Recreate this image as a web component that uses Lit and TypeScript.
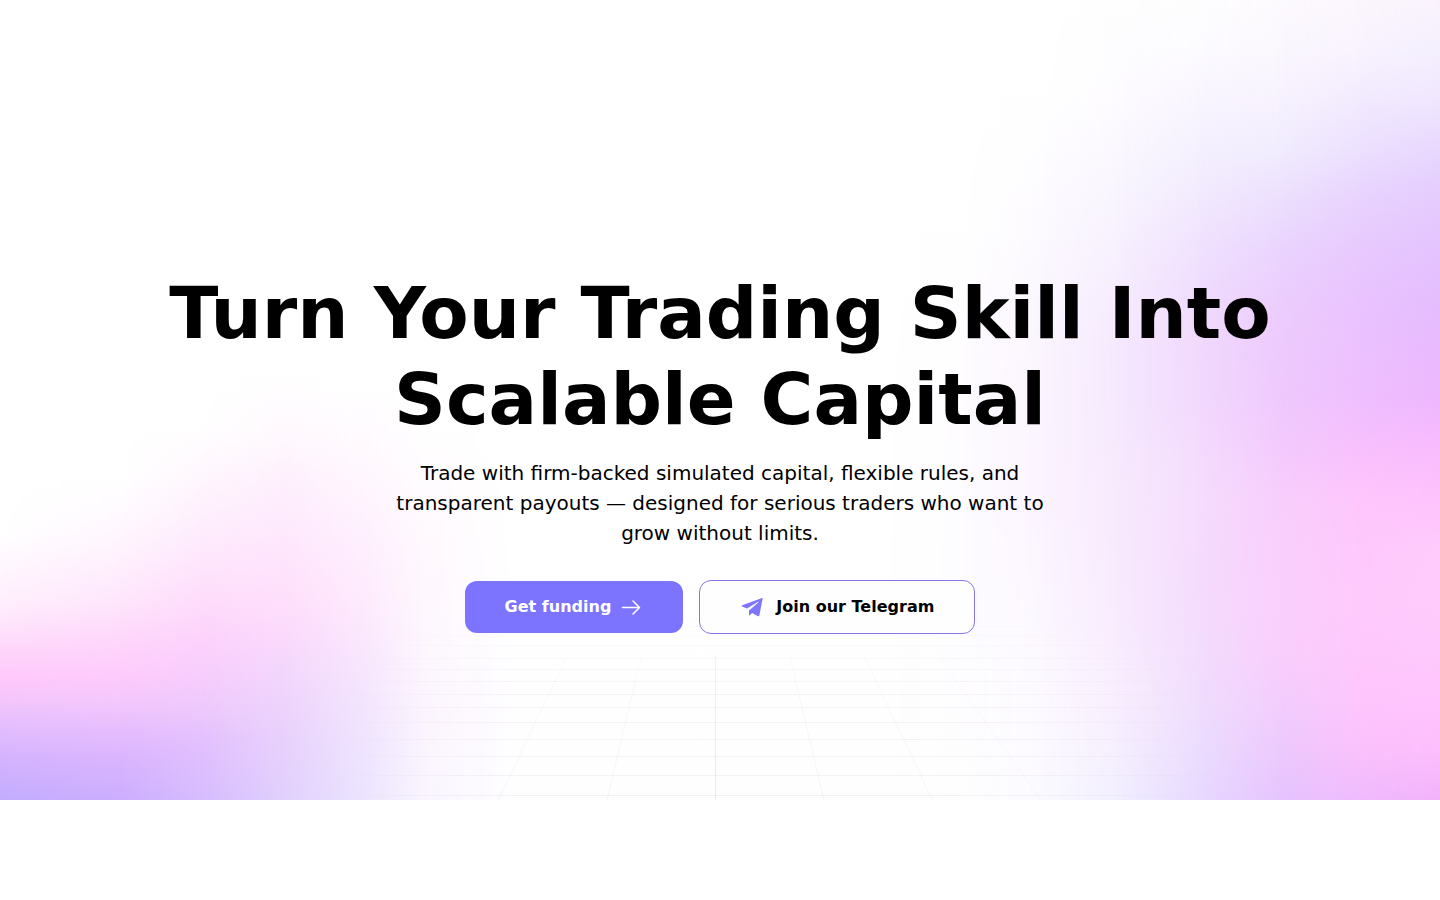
import { LitElement, html, svg, css } from "lit";
import { customElement } from "lit/decorators.js";

type Stop = [number, string];

// Vertical colour ramps of the backdrop, one per x position; neighbours are cross-faded.
const RAMPS: { x: number; stops: Stop[] }[] = [
  { x: 0, stops: [[535, "#ffffff"], [575, "#fff5fe"], [600, "#ffeffd"], [625, "#fee4fc"], [650, "#fed6fb"], [680, "#ffc8fc"], [700, "#f4c6fc"], [730, "#e2bdfe"], [760, "#d4b3fe"], [800, "#c3adfe"]] },
  { x: 120, stops: [[475, "#ffffff"], [510, "#fffbff"], [550, "#fff3fe"], [600, "#fee6fc"], [640, "#fed6fb"], [675, "#fecbfc"], [700, "#f4c7fc"], [730, "#e6bdfe"], [760, "#dab4fe"], [800, "#cbaefe"]] },
  { x: 200, stops: [[425, "#ffffff"], [470, "#fff8fe"], [520, "#feeffd"], [560, "#fee6fc"], [600, "#fedcfb"], [640, "#fdd2fc"], [680, "#f6ccfc"], [710, "#edc8fc"], [740, "#e3c0fe"], [800, "#d6bcfe"]] },
  { x: 280, stops: [[375, "#ffffff"], [440, "#fff8fe"], [480, "#fef0fd"], [520, "#feeafd"], [560, "#fee4fc"], [600, "#fedefb"], [640, "#fad8fc"], [670, "#f3d6fc"], [700, "#eed3fc"], [740, "#e8d0fc"], [800, "#e0cffd"]] },
  { x: 360, stops: [[385, "#ffffff"], [480, "#fff6fe"], [540, "#feeffe"], [600, "#feeafd"], [650, "#f9e6fd"], [700, "#f3e4fd"], [750, "#eee3fe"], [800, "#ebe3fe"]] },
  { x: 430, stops: [[420, "#ffffff"], [550, "#fff9fe"], [650, "#fdf7fe"], [720, "#fcf5fe"], [800, "#faf6ff"]] },
  { x: 520, stops: [[500, "#ffffff"], [800, "#fefeff"]] },
  { x: 880, stops: [[500, "#ffffff"], [800, "#fefefe"]] },
  { x: 960, stops: [[200, "#ffffff"], [400, "#fefcff"], [600, "#fdfcff"], [800, "#fefefe"]] },
  { x: 1040, stops: [[80, "#ffffff"], [200, "#fdfbff"], [300, "#fbf7fe"], [400, "#fbf4fe"], [500, "#fcf4ff"], [600, "#fcf7ff"], [700, "#fdfaff"], [800, "#fbfaff"]] },
  { x: 1120, stops: [[0, "#fefefe"], [100, "#fdfbff"], [200, "#f8f4fe"], [300, "#f6ebfe"], [350, "#f5e8fe"], [400, "#f5e8fe"], [500, "#f7e9fd"], [600, "#f8eafe"], [650, "#f8ecfe"], [700, "#f8edfe"], [750, "#f5eefe"], [800, "#f1eeff"]] },
  { x: 1200, stops: [[0, "#fefdfe"], [50, "#fcfbff"], [100, "#f9f5ff"], [150, "#f4f0fe"], [200, "#f2e9fe"], [250, "#f0e1fe"], [300, "#efdbfd"], [350, "#f1d8fd"], [400, "#f2d8fd"], [450, "#f4dbfd"], [500, "#f5dcfd"], [550, "#f5dbfd"], [650, "#f3dcfd"], [700, "#f0ddfd"], [750, "#ebdcfe"], [800, "#e7d9ff"]] },
  { x: 1280, stops: [[0, "#fdfafe"], [50, "#fbf7fe"], [100, "#f7f2fe"], [150, "#f1ecfe"], [200, "#ecdffd"], [250, "#ead4fe"], [300, "#eccdfd"], [350, "#edcafd"], [400, "#efc9fd"], [450, "#f3cafd"], [500, "#f8cefc"], [600, "#facffc"], [650, "#f9cefc"], [700, "#f3cdfd"], [750, "#ecc9fd"], [800, "#e6c4fe"]] },
  { x: 1360, stops: [[0, "#fbf6fd"], [50, "#f8f3fe"], [100, "#f2eafe"], [150, "#ece0fe"], [200, "#e8d2fe"], [250, "#e8c9fe"], [300, "#e9c3fe"], [350, "#ecc1fe"], [400, "#efbffe"], [450, "#f8c0fd"], [500, "#fec6fc"], [600, "#fecafc"], [650, "#fec8fc"], [700, "#fec5fc"], [750, "#fac1fc"], [800, "#efbbfd"]] },
  { x: 1440, stops: [[0, "#faf3fd"], [50, "#f4effe"], [100, "#f0e6fe"], [130, "#eaddfe"], [180, "#e5cffe"], [250, "#e4c3fe"], [300, "#e4bdfe"], [350, "#e8b9fe"], [400, "#eeb7fe"], [440, "#f7bafe"], [500, "#fec2fc"], [550, "#fecbfc"], [600, "#fecbfc"], [650, "#fec9fc"], [700, "#ffc4fd"], [750, "#fdbefd"], [800, "#f2b2fa"]] },
];

// Perspective floor: rows get further apart towards the viewer.
const ROWS = [617, 626, 635, 645, 658, 669, 681, 694, 707, 722, 739, 756, 775, 795];
const RAYS = [-3, -2, -1, 0, 1, 2, 3, 4];

@customElement("hero-backdrop")
export class HeroBackdrop extends LitElement {
  static styles = css`
    :host {
      display: block;
    }
    .art {
      display: block;
      width: 100%;
      height: 100%;
    }
    .crossfade {
      mask-type: alpha;
    }
  `;

  private ramp(i: number) {
    const { x, stops } = RAMPS[i];
    const from = i === 0 ? 0 : RAMPS[i - 1].x;
    const width = 1440 - from;
    return svg`
      <linearGradient id="ramp${i}" gradientUnits="userSpaceOnUse" x1="0" y1="0" x2="0" y2="800">
        ${stops.map(([y, color]) => svg`<stop offset=${y / 800} stop-color=${color}></stop>`)}
      </linearGradient>
      <linearGradient id="fade${i}" gradientUnits="userSpaceOnUse" x1=${from} y1="0" x2=${x} y2="0">
        <stop offset="0" stop-color="#fff" stop-opacity=${i === 0 ? 1 : 0}></stop>
        <stop offset="1" stop-color="#fff"></stop>
      </linearGradient>
      <mask id="mask${i}" class="crossfade" maskUnits="userSpaceOnUse" x=${from} y="0" width=${width} height="800">
        <rect x=${from} y="0" width=${width} height="800" fill="url(#fade${i})"></rect>
      </mask>
      <rect x=${from} y="0" width=${width} height="800" fill="url(#ramp${i})" mask="url(#mask${i})"></rect>`;
  }

  render() {
    return html`
      <svg class="art" viewBox="0 0 1440 800" preserveAspectRatio="none" aria-hidden="true">
        <defs>
          <linearGradient id="sides" gradientUnits="userSpaceOnUse" x1="330" y1="0" x2="1230" y2="0">
            <stop offset="0" stop-color="#000"></stop>
            <stop offset="0.2" stop-color="#fff"></stop>
            <stop offset="0.7" stop-color="#fff"></stop>
            <stop offset="1" stop-color="#000"></stop>
          </linearGradient>
          <linearGradient id="depth" gradientUnits="userSpaceOnUse" x1="0" y1="600" x2="0" y2="800">
            <stop offset="0" stop-color="#000"></stop>
            <stop offset="0.4" stop-color="#000" stop-opacity="0.3"></stop>
            <stop offset="1" stop-color="#000" stop-opacity="0"></stop>
          </linearGradient>
          <mask id="floor" maskUnits="userSpaceOnUse" x="330" y="600" width="900" height="200">
            <rect x="330" y="600" width="900" height="200" fill="url(#sides)"></rect>
            <rect x="330" y="600" width="900" height="200" fill="url(#depth)"></rect>
          </mask>
        </defs>
        ${RAMPS.map((_, i) => this.ramp(i))}
        <g mask="url(#floor)" stroke="#804080" fill="none">
          ${ROWS.map((y) => svg`<path stroke-opacity="0.08" d="M330 ${y + 0.5}H1230"></path>`)}
          ${RAYS.map((n) => svg`<path stroke-opacity=${n === 0 ? 0.12 : 0.07 - Math.abs(n) * 0.01} d="M${715.5 + n * 74} 655L${715.5 + n * 108.5} 800"></path>`)}
        </g>
      </svg>
    `;
  }
}

@customElement("app-root")
export class AppRoot extends LitElement {
  static styles = css`
    :host {
      display: block;
      min-height: 100vh;
      background: #fff;
      color: #000;
      font-family: "DejaVu Sans", sans-serif;
    }
    .hero {
      position: relative;
      display: flex;
      flex-direction: column;
      align-items: center;
      padding: 270px 24px 166px;
      text-align: center;
      overflow: hidden;
    }
    .backdrop {
      position: absolute;
      inset: 0;
    }
    .content {
      position: relative;
      display: flex;
      flex-direction: column;
      align-items: center;
      max-width: 1200px;
    }
    .title {
      margin: 0;
      font-size: 72px;
      line-height: 86px;
      font-weight: 700;
    }
    .lead {
      margin: 16px 0 32px;
      max-width: 672px;
      font-size: 20px;
      line-height: 30px;
    }
    .actions {
      display: flex;
      flex-wrap: wrap;
      align-items: center;
      justify-content: center;
      gap: 16px;
    }
    .button {
      display: inline-flex;
      align-items: center;
      padding: 14px 40px;
      border-radius: 12px;
      font-size: 16px;
      line-height: 24px;
      font-weight: 700;
      text-decoration: none;
    }
    .primary {
      gap: 8px;
      background: #7c74fe;
      color: #fff;
    }
    .outline {
      gap: 12px;
      border: 1px solid #8578e6;
      background: #fefeff;
      color: #000;
    }
    .icon {
      width: 24px;
      height: 24px;
      flex: none;
    }
  `;

  render() {
    return html`
      <section class="hero">
        <hero-backdrop class="backdrop"></hero-backdrop>
        <div class="content">
          <h1 class="title">Turn Your Trading Skill Into Scalable Capital</h1>
          <p class="lead">
            Trade with firm-backed simulated capital, flexible rules, and transparent payouts —
            designed for serious traders who want to grow without limits.
          </p>
          <div class="actions">
            <a class="button primary" href="#funding">
              <span>Get funding</span>
              <svg class="icon" viewBox="0 0 24 24" fill="none" stroke="currentColor" stroke-width="1.5" stroke-linecap="round" stroke-linejoin="round" aria-hidden="true">
                <path d="M3.5 12.5H20.5M14 6L20.5 12.5L14 19"></path>
              </svg>
            </a>
            <a class="button outline" href="#telegram">
              <svg class="icon" viewBox="0 0 24 24" fill="#8076fc" aria-hidden="true">
                <path d="M22 3L2.2 10.2C1.4 10.6 1.4 11.3 2.2 11.6L7 13.4L17.8 6.9C18.4 6.6 18.7 7 18.3 7.4L9 15.4V20.4C9.4 20.6 9.8 20.4 10.1 20L12.2 18L17.4 21C18.4 21.6 19.2 21.3 19.4 20.2L22.6 4C22.8 3.2 22.6 2.8 22 3Z"></path>
              </svg>
              <span>Join our Telegram</span>
            </a>
          </div>
        </div>
      </section>
    `;
  }
}
